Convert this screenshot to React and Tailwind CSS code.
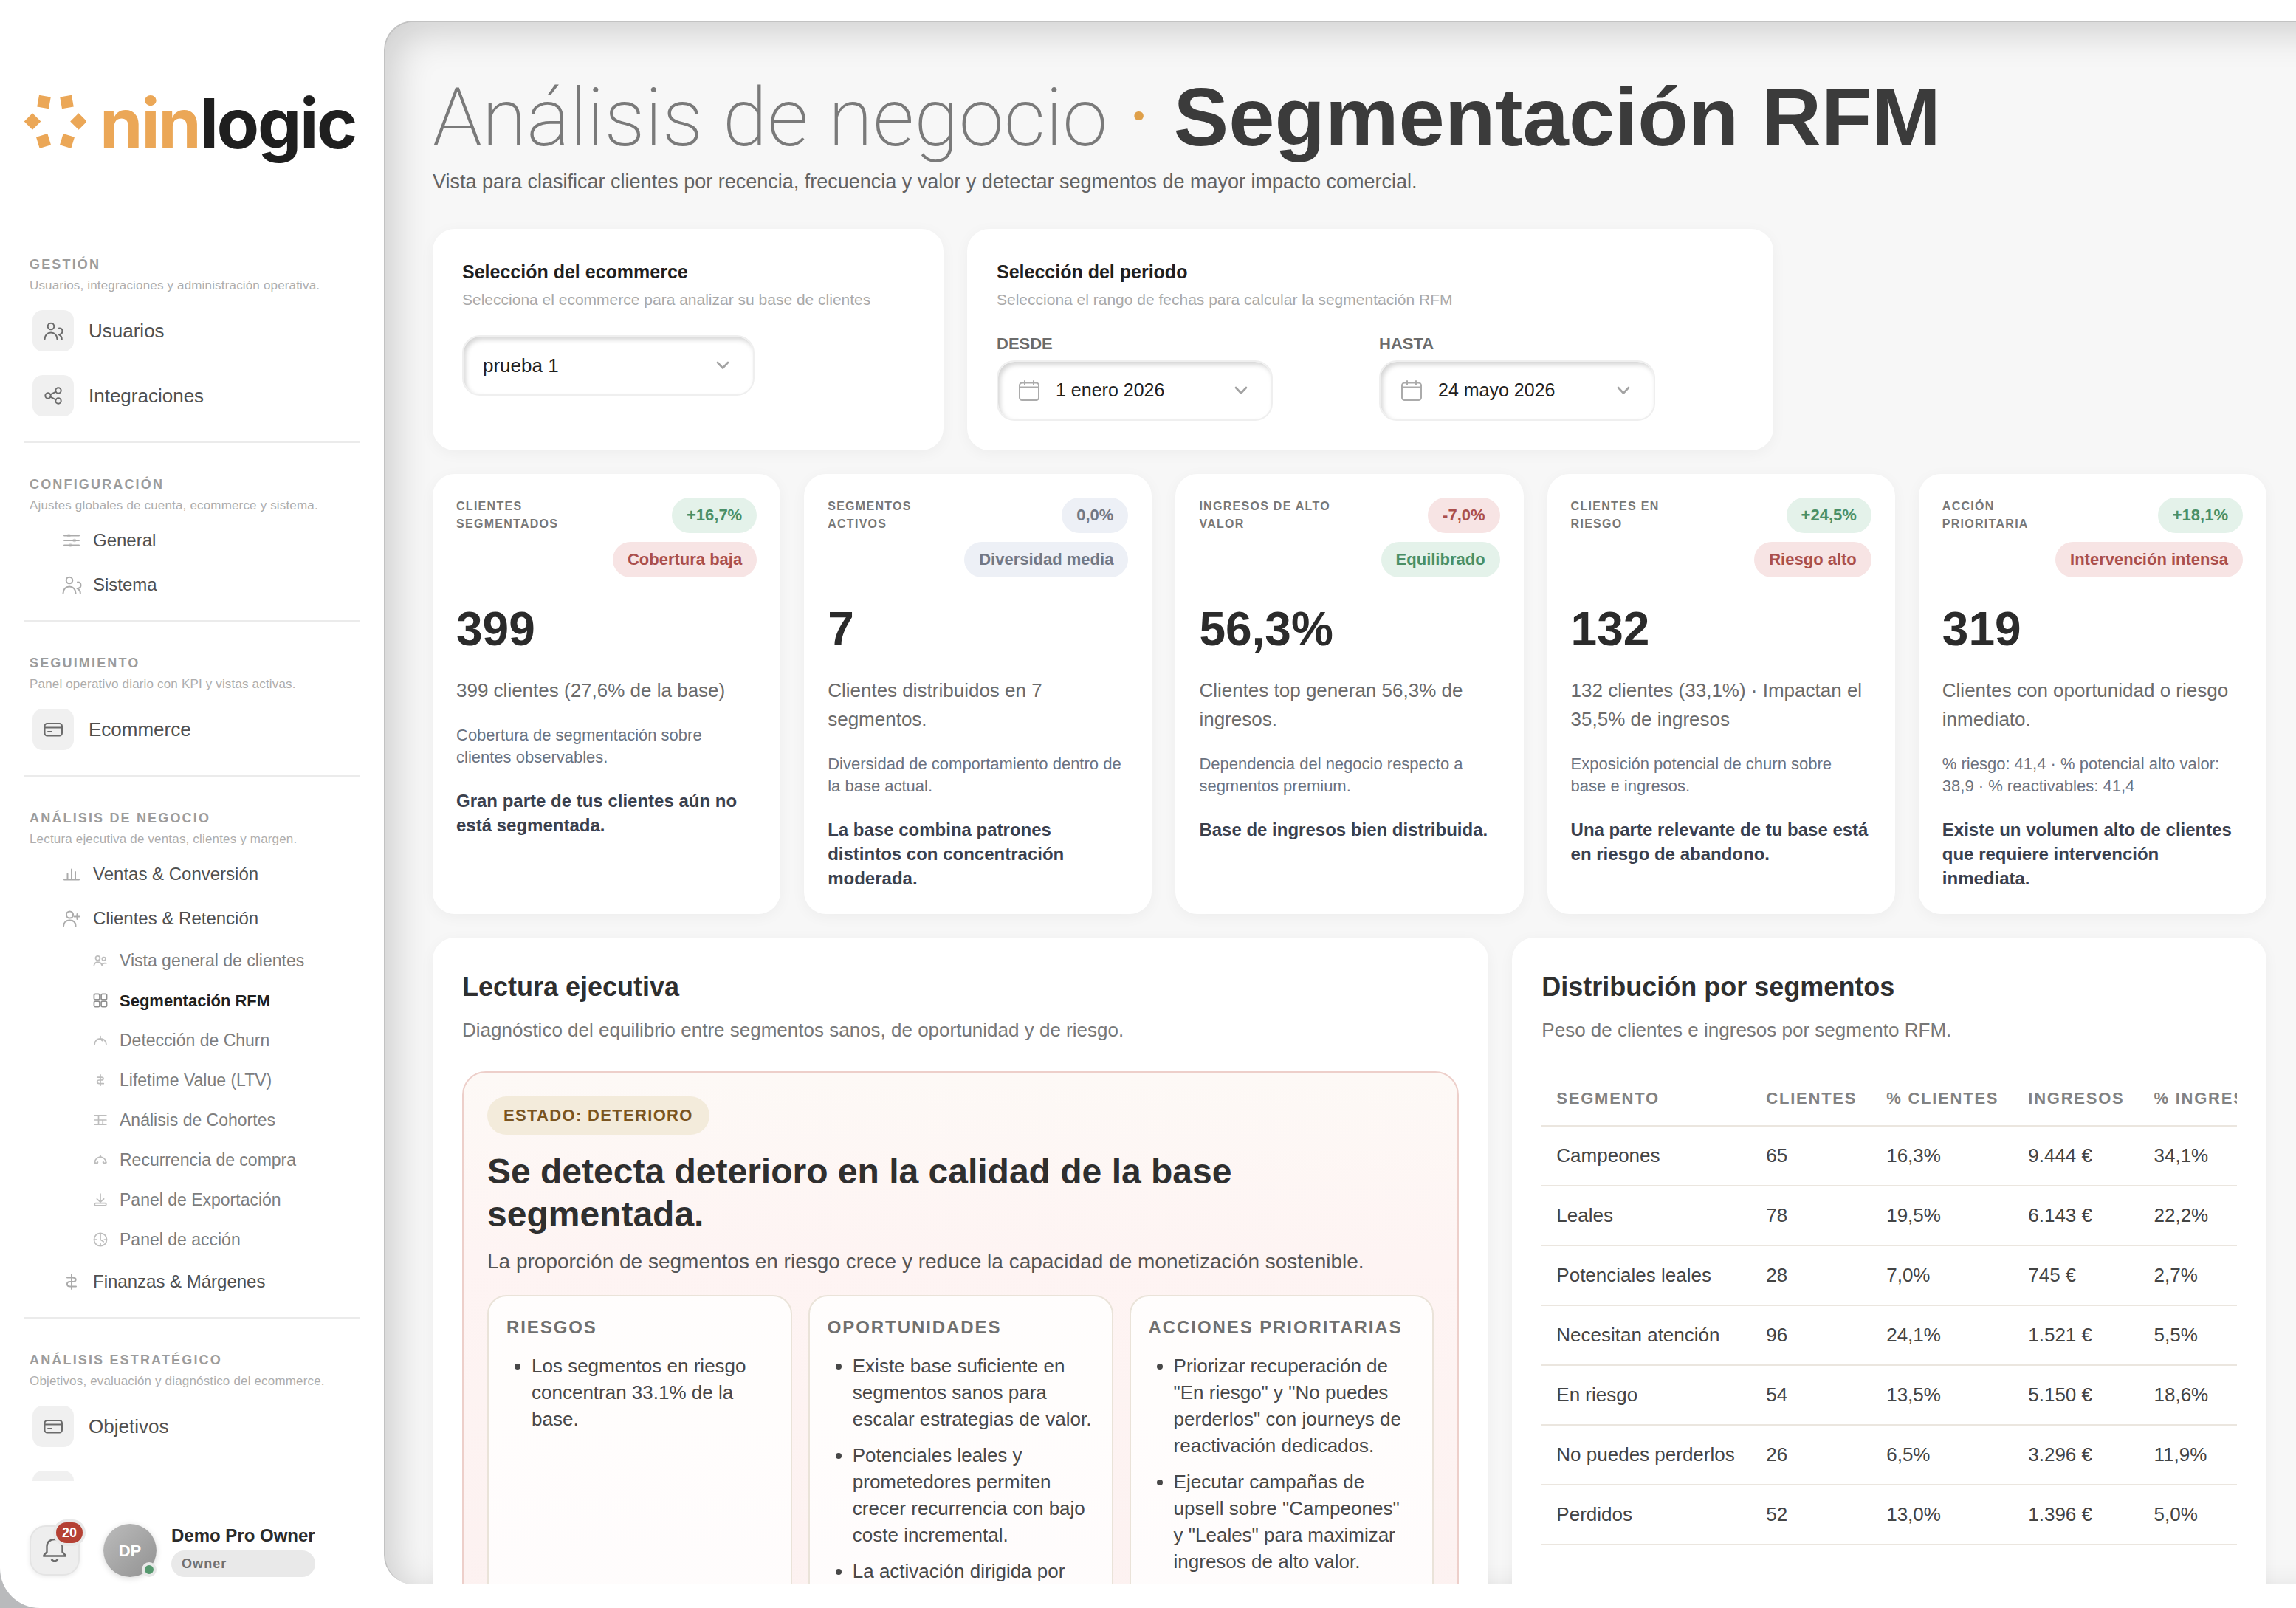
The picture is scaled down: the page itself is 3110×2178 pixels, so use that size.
import React, { useState } from 'react';
import clsx from 'clsx';

const ICONS = {
  users: (
    <>
      <circle cx="11" cy="8" r="4.3" />
      <path d="M2.5 25.5C2.5 20 6 16.5 11 16.5S19.5 20 19.5 25.5" />
      <path d="M22 10.5C25 10.5 26.5 12.5 26.5 14.8C26.5 17.3 24.5 18.8 21.5 19.2C24.5 20.5 25.8 22.5 25.8 25.5" />
    </>
  ),
  share: (
    <>
      <circle cx="7" cy="14" r="3.7" />
      <circle cx="21" cy="7" r="3.7" />
      <circle cx="21" cy="21" r="3.7" />
      <path d="M10.3 12.4L17.7 8.7M10.3 15.6L17.7 19.3" />
    </>
  ),
  card: (
    <>
      <rect x="2.5" y="6" width="23.5" height="16.5" rx="3.5" />
      <path d="M2.5 11.5H26M7 17H12" />
    </>
  ),
  sliders: (
    <>
      <path d="M4 7.5H24M4 14H24M4 20.5H24" />
      <g strokeWidth="4.5" opacity="0.5">
        <path d="M10 7.5H10.5M17.5 14H18M12 20.5H12.5" />
      </g>
    </>
  ),
  bars: <path d="M4 21.5H24M8.5 21.5V13.5M14 21.5V7.5M19 21.5V11" />,
  userPlus: (
    <>
      <circle cx="11.5" cy="9" r="4.6" />
      <path d="M3 24.5C3 19.5 6.5 16.5 11.5 16.5S19.5 19.5 19.5 24.5M17.5 11.5H25M21.5 8V15" />
    </>
  ),
  group: (
    <>
      <circle cx="9" cy="9.5" r="4.2" />
      <circle cx="20.5" cy="11" r="3.2" />
      <path d="M2 23C3 18.5 5.5 17 9.5 17C13.5 17 15.5 19 17 23C18 19.5 20.5 18.5 25 19.5" />
    </>
  ),
  grid: (
    <>
      <rect x="2" y="2" width="10.5" height="10.5" rx="2.5" />
      <rect x="15.5" y="2" width="10.5" height="10.5" rx="2.5" />
      <rect x="2" y="15.5" width="10.5" height="10.5" rx="2.5" />
      <rect x="15.5" y="15.5" width="10.5" height="10.5" rx="2.5" />
    </>
  ),
  gauge: <path d="M3 21.5C4 14.5 8 11 14 11S24 14.5 25 21.5M14 6.5V11.5L17.5 15" />,
  dollar: <path d="M14 4V24M8 8.5H15.5C21 8.5 21 14 15.5 14H12C6.5 14 6.5 20.5 12 20.5H20" />,
  cohorts: <path d="M3 5.5H25M3 14H25M3 22.5H25M10.5 5.5V22.5M18.5 14V22.5" />,
  cycle: (
    <>
      <path d="M3.5 18C4.5 12.5 8 9 14 8.5C20 9 23.5 12.5 24.5 18" />
      <path d="M14 7.5V9M3.5 19C5 21.5 8 21.5 8.5 18.5M24.5 19C23 21.5 20 21.5 19.5 18.5" strokeWidth="3.5" />
    </>
  ),
  download: (
    <>
      <path d="M14 3V18M7.5 12.5L14 18.5L20.5 12.5" />
      <rect x="3" y="20.5" width="22" height="4.5" rx="2.2" />
    </>
  ),
  clock: (
    <>
      <circle cx="14" cy="14" r="12" />
      <path d="M14 4V14L20 18M3 14H7M21.5 14H25M14 22V25" />
    </>
  ),
};

function Icon({ name, className, strokeWidth = 2 }) {
  return (
    <svg
      viewBox="0 0 28 28"
      fill="none"
      stroke="currentColor"
      strokeWidth={strokeWidth}
      strokeLinecap="round"
      strokeLinejoin="round"
      aria-hidden="true"
      className={clsx('shrink-0', className)}
    >
      {ICONS[name]}
    </svg>
  );
}

const Chevron = ({ className }) => (
  <svg viewBox="0 0 18 12" fill="none" stroke="currentColor" strokeWidth="2.6" strokeLinecap="round" strokeLinejoin="round" aria-hidden="true" className={clsx('h-3 w-[18px] text-[#a3a3a3]', className)}>
    <path d="M2 2L9 9.5L16 2" />
  </svg>
);

const NAV = [
  {
    title: 'GESTIÓN',
    text: 'Usuarios, integraciones y administración operativa.',
    items: [
      { label: 'Usuarios', icon: 'users', kind: 'box' },
      { label: 'Integraciones', icon: 'share', kind: 'box' },
    ],
  },
  {
    title: 'CONFIGURACIÓN',
    text: 'Ajustes globales de cuenta, ecommerce y sistema.',
    items: [
      { label: 'General', icon: 'sliders', kind: 'line' },
      { label: 'Sistema', icon: 'users', kind: 'line' },
    ],
  },
  {
    title: 'SEGUIMIENTO',
    text: 'Panel operativo diario con KPI y vistas activas.',
    items: [{ label: 'Ecommerce', icon: 'card', kind: 'box' }],
  },
  {
    title: 'ANÁLISIS DE NEGOCIO',
    text: 'Lectura ejecutiva de ventas, clientes y margen.',
    items: [
      { label: 'Ventas & Conversión', icon: 'bars', kind: 'line' },
      { label: 'Clientes & Retención', icon: 'userPlus', kind: 'line' },
      { label: 'Vista general de clientes', icon: 'group', kind: 'sub' },
      { label: 'Segmentación RFM', icon: 'grid', kind: 'sub', active: true },
      { label: 'Detección de Churn', icon: 'gauge', kind: 'sub' },
      { label: 'Lifetime Value (LTV)', icon: 'dollar', kind: 'sub' },
      { label: 'Análisis de Cohortes', icon: 'cohorts', kind: 'sub' },
      { label: 'Recurrencia de compra', icon: 'cycle', kind: 'sub' },
      { label: 'Panel de Exportación', icon: 'download', kind: 'sub' },
      { label: 'Panel de acción', icon: 'clock', kind: 'sub' },
      { label: 'Finanzas & Márgenes', icon: 'dollar', kind: 'line' },
    ],
  },
  {
    title: 'ANÁLISIS ESTRATÉGICO',
    text: 'Objetivos, evaluación y diagnóstico del ecommerce.',
    items: [
      { label: 'Objetivos', icon: 'card', kind: 'box' },
      { label: '', kind: 'box' },
    ],
  },
];

function NavItem({ item }) {
  if (item.kind === 'box') {
    return (
      <a href="#" className="flex h-[88px] items-center gap-5 pl-3 text-[26px] font-medium text-[#505050]">
        <span className="flex size-14 shrink-0 items-center justify-center rounded-[14px] bg-[#f0f0f0] text-[#6b6b6b]">
          {item.icon && <Icon name={item.icon} className="size-7" />}
        </span>
        {item.label}
      </a>
    );
  }
  if (item.kind === 'line') {
    return (
      <a href="#" className="flex h-[60px] items-center gap-[15px] pl-[51px] text-2xl font-medium text-[#505050]">
        <Icon name={item.icon} className="size-7 text-[#ababab]" />
        {item.label}
      </a>
    );
  }
  return (
    <a
      href="#"
      aria-current={item.active ? 'page' : undefined}
      className={clsx(
        'flex h-[54px] items-center gap-4 pl-[94px]',
        item.active ? 'text-[22px] font-bold text-[#1f1f1f]' : 'text-[23px] text-[#7d7d7d]'
      )}
    >
      <Icon name={item.icon} strokeWidth={2.4} className={clsx('size-5', item.active ? 'text-[#8f8f8f]' : 'text-[#bdbdbd]')} />
      {item.label}
    </a>
  );
}

function Sidebar() {
  return (
    <aside className="flex w-[520px] shrink-0 flex-col">
      <a href="#" aria-label="ninlogic" className="flex items-center gap-[18px] pt-[121px] pb-[131px] pl-[33px]">
        <svg viewBox="0 0 84 76" className="mb-1 h-[76px] w-[84px] shrink-0" fill="#eba757" aria-hidden="true">
          <rect x="18.5" y="3" width="16" height="16" transform="rotate(10 26.5 11)" />
          <rect x="49.5" y="3" width="16" height="16" transform="rotate(-10 57.5 11)" />
          <rect x="3" y="29.5" width="16" height="16" transform="rotate(45 11 37.5)" />
          <rect x="65.5" y="29.5" width="16" height="16" transform="rotate(45 73.5 37.5)" />
          <rect x="18" y="56" width="16" height="16" transform="rotate(-17 26 64)" />
          <rect x="50" y="56" width="16" height="16" transform="rotate(17 58 64)" />
        </svg>
        <span className="font-['Inter',sans-serif] text-[94px] leading-[92px] font-bold tracking-tight text-[#1f1f1f]">
          <span className="text-[#eba757]">nin</span>logic
        </span>
      </a>

      <nav className="min-h-0 flex-1 basis-0 overflow-hidden px-8">
        {NAV.map((section) => (
          <section key={section.title} className="mb-[42px] border-b-2 border-[#ebebeb] pb-[18px]">
            <h2 className="px-2 text-lg leading-7 font-bold tracking-[0.12em] text-[#9c9c9c]">{section.title}</h2>
            <p className="px-2 pb-0.5 text-[17px] leading-[30px] tracking-[0.01em] text-[#adadad]">{section.text}</p>
            {section.items.map((item, i) => (
              <NavItem key={i} item={item} />
            ))}
          </section>
        ))}
      </nav>

      <div className="flex h-[172px] shrink-0 items-start pt-[58px] pl-10">
        <button type="button" aria-label="Notificaciones" className="relative mt-0.5 flex size-[68px] items-center justify-center rounded-[22px] border-2 border-[#e4e4e4] bg-[#eeeeee] text-[#6b6b6b] shadow-[0_2px_6px_rgba(0,0,0,0.08)]">
          <svg viewBox="0 0 34 36" className="h-9 w-[34px]" fill="none" stroke="currentColor" strokeWidth="2.4" aria-hidden="true">
            <path d="M2.5 25.5H31.5V24.5L27.5 20V12.5C27.5 6.5 23 3 17 3S6.5 6.5 6.5 12.5V20L2.5 24.5Z" />
            <path d="M13 30C14 33.5 20 33.5 21 30" strokeWidth="2.8" />
          </svg>
          <span className="absolute -top-1.5 -right-1.5 rounded-full bg-[#b54134] px-2 text-lg leading-7 font-bold text-white ring-4 ring-[#e8e8e8]">20</span>
        </button>
        <div className="relative ml-8 flex size-[72px] items-center justify-center rounded-full bg-linear-to-br from-[#bcbcbc] to-[#929292] text-[22px] font-bold text-white shadow-[0_2px_8px_rgba(0,0,0,0.15)]">
          DP
          <span className="absolute right-0 bottom-0 size-5 rounded-full border-4 border-[#e8e8e8] bg-[#56996f]" />
        </div>
        <div className="ml-5 flex flex-col gap-1">
          <strong className="text-2xl leading-8 text-[#2b2b2b]">Demo Pro Owner</strong>
          <span className="rounded-full bg-[#e9e9e9] px-3.5 text-lg leading-9 font-bold tracking-[0.06em] text-[#707070]">Owner</span>
        </div>
      </div>
    </aside>
  );
}

const CARD = 'bg-white shadow-[0_4px_20px_rgba(0,0,0,0.045)]';
const FIELD =
  'h-[82px] rounded-3xl border-2 border-[#efefef] bg-white text-left text-[#1f1f1f] shadow-[inset_3px_4px_6px_rgba(0,0,0,0.17)]';

function DateField({ id, label, value }) {
  return (
    <div className="flex flex-col gap-2">
      <span id={id} className="text-[22px] leading-7 font-bold text-[#6b6b6b]">{label}</span>
      <button type="button" aria-labelledby={id} className={clsx(FIELD, 'flex w-[374px] items-center pr-8 pl-7 text-[25px]')}>
        <svg viewBox="0 0 28 28" className="mr-[22px] size-7 text-[#ababab]" fill="none" stroke="currentColor" strokeWidth="2" strokeLinecap="round" aria-hidden="true">
          <rect x="1" y="3.5" width="26" height="23.5" rx="3.5" />
          <path d="M1 9.5H27M8 1V6M20 1V6" />
        </svg>
        {value}
        <Chevron className="ml-auto" />
      </button>
    </div>
  );
}

function Filters() {
  const [shop, setShop] = useState('prueba 1');

  return (
    <div className="mt-[46px] flex gap-8">
      <section className={clsx(CARD, 'w-[692px] rounded-[30px] p-10')}>
        <h2 className="text-[25px] leading-9 font-bold text-[#1f1f1f]">
          <label htmlFor="shop">Selección del ecommerce</label>
        </h2>
        <p className="mt-1 text-[21px] leading-8 text-[#a9a9a9]">Selecciona el ecommerce para analizar su base de clientes</p>
        <div className="relative mt-8 w-[396px]">
          <select id="shop" value={shop} onChange={(e) => setShop(e.target.value)} className={clsx(FIELD, 'w-full appearance-none px-[26px] text-[26px]')}>
            <option>prueba 1</option>
          </select>
          <Chevron className="pointer-events-none absolute top-[35px] right-[34px]" />
        </div>
      </section>

      <section className={clsx(CARD, 'w-[1092px] rounded-[30px] p-10')}>
        <h2 className="text-[25px] leading-9 font-bold text-[#1f1f1f]">Selección del periodo</h2>
        <p className="mt-1 text-[21px] leading-8 text-[#a9a9a9]">Selecciona el rango de fechas para calcular la segmentación RFM</p>
        <div className="mt-[30px] grid grid-cols-2 gap-6">
          <DateField id="desde" label="DESDE" value="1 enero 2026" />
          <DateField id="hasta" label="HASTA" value="24 mayo 2026" />
        </div>
      </section>
    </div>
  );
}

const TONES = {
  green: 'bg-[#e4f2ea] text-[#4a8f66]',
  red: 'bg-[#f7e4e4] text-[#ab4f4b]',
  gray: 'bg-[#edf0f6] text-[#727885]',
};

const KPIS = [
  {
    label: 'CLIENTES SEGMENTADOS',
    delta: ['+16,7%', 'green'],
    status: ['Cobertura baja', 'red'],
    value: '399',
    summary: '399 clientes (27,6% de la base)',
    detail: 'Cobertura de segmentación sobre clientes observables.',
    insight: 'Gran parte de tus clientes aún no está segmentada.',
  },
  {
    label: 'SEGMENTOS ACTIVOS',
    delta: ['0,0%', 'gray'],
    status: ['Diversidad media', 'gray'],
    value: '7',
    summary: 'Clientes distribuidos en 7 segmentos.',
    detail: 'Diversidad de comportamiento dentro de la base actual.',
    insight: 'La base combina patrones distintos con concentración moderada.',
  },
  {
    label: 'INGRESOS DE ALTO VALOR',
    delta: ['-7,0%', 'red'],
    status: ['Equilibrado', 'green'],
    value: '56,3%',
    summary: 'Clientes top generan 56,3% de ingresos.',
    detail: 'Dependencia del negocio respecto a segmentos premium.',
    insight: 'Base de ingresos bien distribuida.',
  },
  {
    label: 'CLIENTES EN RIESGO',
    delta: ['+24,5%', 'green'],
    status: ['Riesgo alto', 'red'],
    value: '132',
    summary: '132 clientes (33,1%) · Impactan el 35,5% de ingresos',
    detail: 'Exposición potencial de churn sobre base e ingresos.',
    insight: 'Una parte relevante de tu base está en riesgo de abandono.',
  },
  {
    label: 'ACCIÓN PRIORITARIA',
    delta: ['+18,1%', 'green'],
    status: ['Intervención intensa', 'red'],
    value: '319',
    summary: 'Clientes con oportunidad o riesgo inmediato.',
    detail: '% riesgo: 41,4 · % potencial alto valor: 38,9 · % reactivables: 41,4',
    insight: 'Existe un volumen alto de clientes que requiere intervención inmediata.',
  },
];

function Pill({ text, tone }) {
  return <span className={clsx('rounded-full px-5 text-[22px] leading-[48px] font-bold whitespace-nowrap', TONES[tone])}>{text}</span>;
}

function KpiCard({ kpi }) {
  return (
    <article className={clsx(CARD, 'rounded-[30px] p-8')}>
      <div className="flex justify-between">
        <h3 className="max-w-[185px] text-base leading-6 font-bold tracking-[0.08em] text-[#777777]">{kpi.label}</h3>
        <div className="flex flex-col items-end gap-3">
          <Pill text={kpi.delta[0]} tone={kpi.delta[1]} />
          <Pill text={kpi.status[0]} tone={kpi.status[1]} />
        </div>
      </div>
      <p className="mt-[38px] text-[64px] leading-[64px] font-bold text-[#2b2b2b]">{kpi.value}</p>
      <p className="mt-8 text-[26px] leading-[39px] text-[#6b6b6b]">{kpi.summary}</p>
      <p className="mt-[26px] text-[22px] leading-[30px] text-[#6b7280]">{kpi.detail}</p>
      <p className="mt-[27px] text-2xl leading-[33px] font-bold text-[#3a404d]">{kpi.insight}</p>
    </article>
  );
}

const READING = [
  { title: 'RIESGOS', items: ['Los segmentos en riesgo concentran 33.1% de la base.'] },
  {
    title: 'OPORTUNIDADES',
    items: [
      'Existe base suficiente en segmentos sanos para escalar estrategias de valor.',
      'Potenciales leales y prometedores permiten crecer recurrencia con bajo coste incremental.',
      'La activación dirigida por',
    ],
  },
  {
    title: 'ACCIONES PRIORITARIAS',
    items: [
      'Priorizar recuperación de "En riesgo" y "No puedes perderlos" con journeys de reactivación dedicados.',
      'Ejecutar campañas de upsell sobre "Campeones" y\u00a0"Leales" para maximizar ingresos de alto valor.',
    ],
  },
];

function Reading() {
  return (
    <section className={clsx(CARD, 'rounded-[30px] p-10')}>
      <h2 className="text-4xl leading-[54px] font-bold text-[#2f2f2f]">Lectura ejecutiva</h2>
      <p className="mt-3 text-[26px] leading-[39px] text-[#777777]">Diagnóstico del equilibrio entre segmentos sanos, de oportunidad y de riesgo.</p>
      <div className="mt-9 rounded-[32px] border-2 border-[#edcfca] bg-linear-to-b from-[#fdf9f6] via-[#fef4f3] via-30% to-[#fcf1f0] p-8">
        <span className="inline-block rounded-full bg-[#f3ebdb] px-[22px] text-[22px] leading-[52px] font-bold tracking-[0.06em] text-[#7a5420]">ESTADO: DETERIORO</span>
        <h3 className="mt-[21px] text-5xl leading-[58px] font-bold text-[#2f2f2f]">Se detecta deterioro en la calidad de la base segmentada.</h3>
        <p className="mt-3.5 text-[28px] leading-[42px] text-[#555555]">La proporción de segmentos en riesgo crece y reduce la capacidad de monetización sostenible.</p>
        <div className="mt-6 grid min-h-[500px] grid-cols-3 gap-[22px]">
          {READING.map((col) => (
            <div key={col.title} className="rounded-[26px] border-2 border-[#eae3d9] bg-white/80 p-6">
              <h4 className="text-2xl leading-9 font-bold tracking-[0.08em] text-[#707070]">{col.title}</h4>
              <ul className="mt-4 flex list-disc flex-col gap-[13px] pl-[34px] text-[26px] leading-9 text-[#484848]">
                {col.items.map((item) => (
                  <li key={item}>{item}</li>
                ))}
              </ul>
            </div>
          ))}
        </div>
      </div>
    </section>
  );
}

const COLUMNS = ['SEGMENTO', 'CLIENTES', '% CLIENTES', 'INGRESOS', '% INGRESOS'];

const ROWS = [
  ['Campeones', '65', '16,3%', '9.444 €', '34,1%'],
  ['Leales', '78', '19,5%', '6.143 €', '22,2%'],
  ['Potenciales leales', '28', '7,0%', '745 €', '2,7%'],
  ['Necesitan atención', '96', '24,1%', '1.521 €', '5,5%'],
  ['En riesgo', '54', '13,5%', '5.150 €', '18,6%'],
  ['No puedes perderlos', '26', '6,5%', '3.296 €', '11,9%'],
  ['Perdidos', '52', '13,0%', '1.396 €', '5,0%'],
];

function Distribution() {
  return (
    <section className={clsx(CARD, 'min-w-0 rounded-[30px] p-10')}>
      <h2 className="text-4xl leading-[54px] font-bold text-[#2f2f2f]">Distribución por segmentos</h2>
      <p className="mt-3 text-[26px] leading-[39px] text-[#777777]">Peso de clientes e ingresos por segmento RFM.</p>
      <div className="mt-9 overflow-hidden">
        <table className="w-full border-separate border-spacing-0 text-left whitespace-nowrap">
          <thead>
            <tr>
              {COLUMNS.map((col) => (
                <th key={col} scope="col" className="border-b-2 border-[#ebe6df] p-5 text-[22px] leading-[33px] font-bold tracking-[0.08em] text-[#828282] first:min-w-[284px]">
                  {col}
                </th>
              ))}
            </tr>
          </thead>
          <tbody>
            {ROWS.map((row) => (
              <tr key={row[0]}>
                {row.map((cell, i) => (
                  <td key={i} className="border-b-2 border-[#ebe6df] p-5 text-[26px] leading-[39px] text-[#444444]">
                    {cell}
                  </td>
                ))}
              </tr>
            ))}
          </tbody>
        </table>
      </div>
    </section>
  );
}

export default function App() {
  return (
    <div className="h-screen overflow-hidden bg-[#b9babc] font-['Liberation_Sans',Arial,sans-serif]">
      <div className="flex h-full overflow-hidden rounded-bl-[54px] bg-white">
        <Sidebar />
        <main className="-mr-20 mt-7 mb-8 min-w-0 flex-1 overflow-hidden rounded-l-[40px] border-t-2 border-l-2 border-[#c2c2c2] bg-[#f7f7f7] pt-[73px] pr-[120px] pl-16 shadow-[inset_14px_14px_50px_rgba(0,0,0,0.16)]">
          <h1 className="text-[112px] leading-[112px] whitespace-nowrap">
            <span className="font-['Roboto',sans-serif] text-[110px] font-extralight text-[#7a7a7a]">Análisis de negocio</span>
            <span className="mr-8 ml-7 font-['Roboto',sans-serif] text-[#dfa04a]">·</span>
            <span className="font-bold text-[#3b3b3b]">Segmentación RFM</span>
          </h1>
          <p className="mt-3 text-[27px] leading-9 font-medium text-[#636363]">
            Vista para clasificar clientes por recencia, frecuencia y valor y detectar segmentos de mayor impacto comercial.
          </p>
          <Filters />
          <div className="mt-8 grid grid-cols-5 gap-8">
            {KPIS.map((kpi) => (
              <KpiCard key={kpi.label} kpi={kpi} />
            ))}
          </div>
          <div className="mt-8 grid grid-cols-[7fr_5fr] gap-8">
            <Reading />
            <Distribution />
          </div>
        </main>
      </div>
    </div>
  );
}
